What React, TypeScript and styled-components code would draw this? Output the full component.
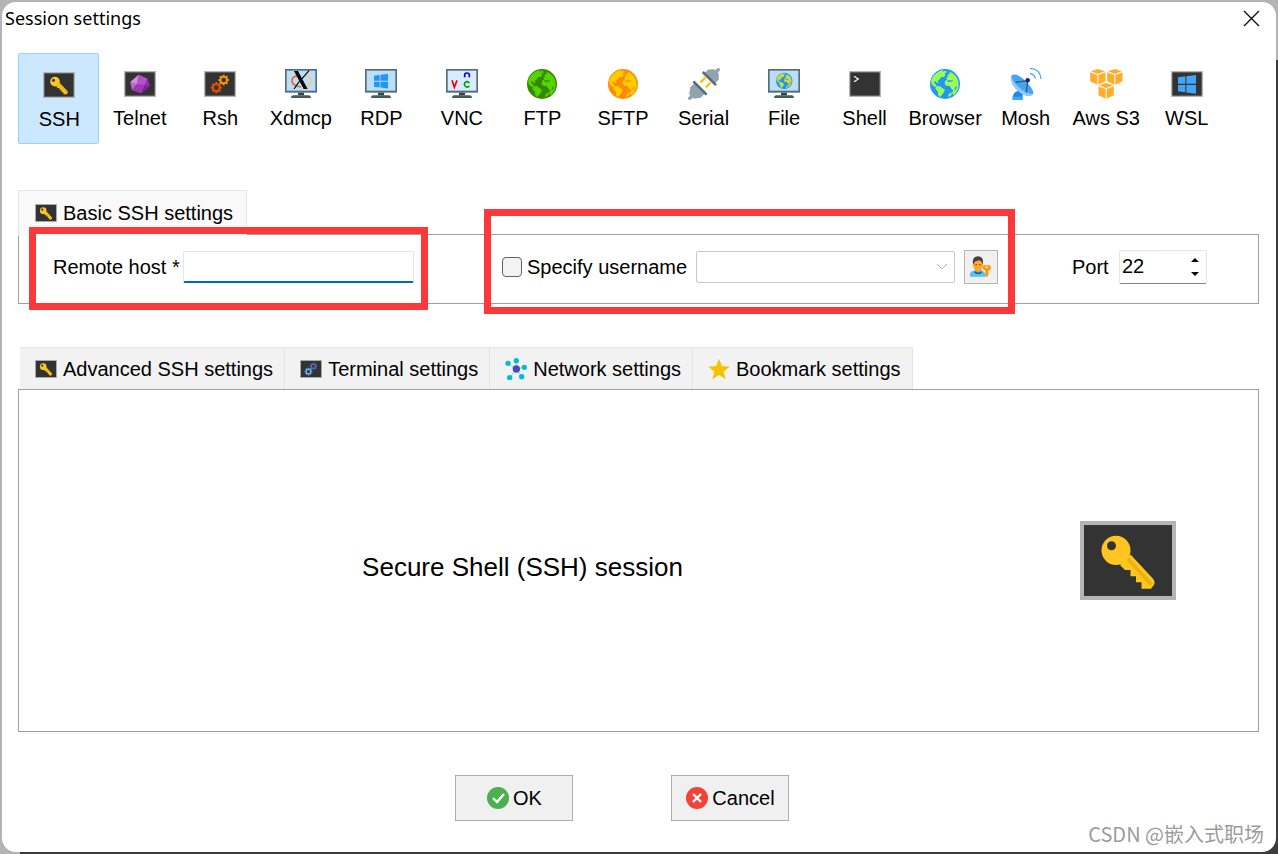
import React, { useState } from "react";
import styled, { createGlobalStyle, css } from "styled-components";

const GlobalStyle = createGlobalStyle`
  * { box-sizing: border-box; }
  body {
    margin: 0;
    font-family: "Liberation Sans", Arial, sans-serif;
    font-size: 20px;
    line-height: 24px;
    color: #000;
    background: #b4b4b4;
  }
  button, input, select { font: inherit; color: inherit; }
`;

/* ---------- window ---------- */

const Desktop = styled.div`
  display: flex;
  min-height: 100vh;
  padding: 2px;
  background:
    linear-gradient(#3c3c3c, #3c3c3c) 20px 100% / 100% 12px no-repeat,
    linear-gradient(transparent 60px, #3c3c3c 60px) 100% 0 / 12px 100% no-repeat,
    #b4b4b4;
`;

const Dialog = styled.main`
  position: relative;
  flex: 1;
  display: flex;
  flex-direction: column;
  min-width: 0;
  background: #fff;
  border-radius: 14px;
`;

const TitleBar = styled.header`
  display: flex;
  align-items: center;
  justify-content: space-between;
  height: 32px;
  padding: 0 14px 0 3px;
`;

const Title = styled.h1`
  margin: 0;
  font: 400 18px/24px "Noto Sans", "Open Sans", sans-serif;
`;

const CloseButton = styled.button`
  display: flex;
  padding: 2px;
  border: 0;
  background: none;
`;

const Content = styled.div`
  flex: 1;
  display: flex;
  flex-direction: column;
  padding: 19px 17px 31px 16px;
`;

/* ---------- session types ---------- */

const SessionTypes = styled.nav`
  display: grid;
  grid-template-columns: repeat(15, 1fr);
  margin-right: 33px;
`;

const SessionType = styled.button<{ $active?: boolean }>`
  display: flex;
  flex-direction: column;
  align-items: center;
  gap: 6px;
  min-width: 0;
  height: 91px;
  padding: 14px 0 0 2px;
  border: 1px solid transparent;
  border-radius: 2px;
  background: none;
  white-space: nowrap;
  ${(p) =>
    p.$active &&
    css`
      padding-top: 15px;
      background: #cce8ff;
      border-color: #99d1ff;
    `}
`;

const IconBox = styled.span`
  display: flex;
  align-items: center;
  justify-content: center;
  height: 32px;
`;

/* ---------- tabs and panels ---------- */

const Section = styled.section<{ $grow?: boolean }>`
  display: flex;
  flex-direction: column;
  flex: ${(p) => (p.$grow ? "1" : "none")};
  margin-top: ${(p) => (p.$grow ? "43px" : "46px")};
`;

const TabList = styled.div<{ $inset?: boolean }>`
  display: flex;
  padding-left: ${(p) => (p.$inset ? "2px" : "0")};
`;

const Tab = styled.button<{ $active?: boolean }>`
  display: flex;
  align-items: center;
  gap: 6px;
  height: 42px;
  padding: 0 11px 0 15px;
  border: solid #e5e5e5;
  border-width: 1px 1px 0 0;
  background: #f2f2f2;
  white-space: nowrap;
  ${(p) =>
    p.$active &&
    css`
      position: relative;
      z-index: 1;
      height: 46px;
      margin-bottom: -2px;
      padding: 0 13px 2px 16px;
      border-left-width: 1px;
      background: #f9f9f9;
    `}
`;

const Panel = styled.div`
  border: 1px solid #a0a0a0;
`;

const BasicForm = styled(Panel)`
  display: grid;
  grid-template-columns: 449fr 570fr 186fr;
  padding: 15px 0 19px 34px;
`;

const SessionPanel = styled(Panel)`
  flex: 1;
  display: grid;
  grid-template-columns: 1007fr 232fr;
  align-items: center;
  justify-items: center;
  min-height: 160px;
  > svg { margin-right: 28px; }
`;

const SessionName = styled.p`
  margin: 0;
  padding-top: 12px;
  font-size: 26px;
  line-height: 32px;
`;

/* ---------- form parts ---------- */

const Field = styled.div`
  position: relative;
  justify-self: start;
  display: flex;
  align-items: center;
  height: 34px;
  white-space: nowrap;
`;

const Label = styled.label<{ $width: number }>`
  width: ${(p) => p.$width}px;
`;

const Highlight = styled.span<{ $inset: string }>`
  position: absolute;
  z-index: 2;
  inset: ${(p) => p.$inset};
  border: 7px solid #fd3838;
  pointer-events: none;
`;

const HostInput = styled.input`
  width: 231px;
  height: 32px;
  padding: 0 4px;
  border: 1px solid #e5e5e5;
  border-bottom: 2px solid #0067c0;
  border-radius: 2px;
  background: #fff;
  outline: 0;
`;

const CheckBox = styled.input`
  appearance: none;
  width: 20px;
  height: 20px;
  margin: 0 5px 0 0;
  border: 1px solid #626262;
  border-radius: 4px;
  background: #f3f3f3;
  &:checked { background: #0067c0; }
`;

const SelectWrap = styled.span`
  display: grid;
  align-items: center;
  > * { grid-area: 1 / 1; }
  > svg { justify-self: end; margin-right: 7px; pointer-events: none; }
`;

const Select = styled.select`
  appearance: none;
  width: 259px;
  height: 32px;
  padding: 0 28px 0 6px;
  border: 1px solid #c8c8c8;
  border-radius: 2px;
  background: #fff;
  &:disabled { opacity: 1; }
`;

const UserButton = styled.button`
  display: flex;
  align-items: center;
  justify-content: center;
  width: 34px;
  height: 34px;
  margin-left: 9px;
  padding: 0;
  border: 1px solid #b4b4b4;
  background: #f0f0f0;
`;

const Spinner = styled.span`
  display: flex;
  width: 88px;
  height: 34px;
  border: 1px solid #e5e5e5;
  border-bottom-color: #868686;
  border-radius: 2px;
`;

const PortInput = styled.input`
  flex: 1;
  min-width: 0;
  padding: 0 0 2px 2px;
  border: 0;
  background: none;
  outline: 0;
  appearance: textfield;
  &::-webkit-inner-spin-button { appearance: none; }
`;

const SpinButtons = styled.span`
  display: flex;
  flex-direction: column;
  justify-content: center;
  gap: 2px;
  width: 22px;
`;

const SpinButton = styled.button`
  display: flex;
  align-items: center;
  justify-content: center;
  height: 12px;
  padding: 0;
  border: 0;
  background: none;
`;

/* ---------- footer ---------- */

const Actions = styled.footer`
  display: flex;
  justify-content: center;
  gap: 98px;
  margin: 43px 34px 0 0;
`;

const ActionButton = styled.button`
  display: flex;
  align-items: center;
  justify-content: center;
  gap: 4px;
  width: 118px;
  height: 46px;
  padding: 0 0 0 2px;
  border: 1px solid #adadad;
  background: #f0f0f0;
`;

const Watermark = styled.span`
  position: absolute;
  right: 12px;
  bottom: 6px;
  font: 400 20px/24px "Noto Sans CJK SC", sans-serif;
  color: #9c9c9c;
`;

/* ---------- icons ---------- */

const TerminalFrame = ({ width = 32, height = 26, children }: { width?: number; height?: number; children: React.ReactNode }) => (
  <svg width={width} height={height} viewBox="0 0 96 78" preserveAspectRatio="none" aria-hidden="true">
    <rect width="96" height="78" fill="#b4b4b4" />
    <rect x="4" y="4" width="88" height="70" fill="#333" />
    {children}
  </svg>
);

const KeyIcon = (p: { width?: number; height?: number }) => (
  <TerminalFrame {...p}>
    <path d="M50.500 33 73 57q2.500 3 1 6l-3 4h-9.500v-6.500H56V54.500h-5.500V48.500H45l-5-5z" fill="#ffc520" />
    <path d="M48 35 73 62l-3 2-25-27z" fill="#eab20c" />
    <circle cx="36" cy="29" r="14.500" fill="#ffc520" />
    <circle cx="31.500" cy="24.500" r="4.500" fill="#333" />
  </TerminalFrame>
);

const gearPath = (cx: number, cy: number, r: number) => {
  const points: string[] = [];
  for (let i = 0; i < 8; i++) {
    const a = (i * Math.PI) / 4;
    [[-0.3, 0.72], [-0.19, 1], [0.19, 1], [0.3, 0.72]].forEach(([d, k]) =>
      points.push(`${(cx + r * k * Math.cos(a + d)).toFixed(2)} ${(cy + r * k * Math.sin(a + d)).toFixed(2)}`)
    );
  }
  const h = r * 0.42;
  return `M${points.join("L")}ZM${cx - h} ${cy}a${h} ${h} 0 1 0 ${2 * h} 0a${h} ${h} 0 1 0 ${-2 * h} 0Z`;
};

const GearsIcon = ({ back, front, ...p }: { back: string; front: string; width?: number; height?: number }) => (
  <TerminalFrame {...p}>
    <path fillRule="evenodd" fill={back} d={gearPath(59, 27, 16)} />
    <path fillRule="evenodd" fill={front} d={gearPath(37, 50, 17)} />
  </TerminalFrame>
);

const GemIcon = () => (
  <TerminalFrame>
    <path d="M44 11 70 23 77 44 52 67 24 57 19 33z" fill="#ab47bc" />
    <path d="M44 11 38 40 19 33z" fill="#ce93d8" />
    <path d="M19 33 38 40 24 57z" fill="#ba68c8" />
    <path d="M44 11 70 23 62 42 38 40z" fill="#b650ca" />
    <path d="M70 23 77 44 62 42z" fill="#9c27b0" />
    <path d="M38 40 62 42 52 67 24 57z" fill="#a236b5" />
    <path d="M62 42 77 44 52 67z" fill="#7b1fa2" />
  </TerminalFrame>
);

const ShellIcon = () => (
  <TerminalFrame>
    <path d="M15 16 28 24 15 32" fill="none" stroke="#fff" strokeWidth="3.500" />
  </TerminalFrame>
);

const windowsPath = "M0 4 22 1V23H0ZM25 0.500 54 -3V23H25ZM0 27H22V49L0 46ZM25 27H54V53L25 49.500Z";

const WslIcon = () => (
  <TerminalFrame>
    <path transform="translate(21 15)" d={windowsPath} fill="#42a5f5" />
  </TerminalFrame>
);

const Monitor = ({ screen = "#bbdefb", children }: { screen?: string; children: React.ReactNode }) => (
  <svg width="32" height="30" viewBox="0 0 96 90" aria-hidden="true">
    <rect width="96" height="71" fill="#546e7a" />
    <rect x="5" y="5" width="86" height="60" fill={screen} />
    <path d="M39 71H57V79H39Z" fill="#37474f" />
    <path d="M24 79H72Q78 80 78 87H18Q18 80 24 79Z" fill="#455a64" />
    {children}
  </svg>
);

const XdmcpIcon = () => (
  <Monitor>
    <path d="M40 19C14 24 12 48 48 54" fill="none" stroke="#f4652a" strokeWidth="5" />
    <path d="M60 18C86 25 84 48 56 54" fill="none" stroke="#ffc46b" strokeWidth="4" />
    <path d="M27 6H39L68 60H56Z" fill="#000" />
    <path d="M72 5 51 29M43 37 27 60" stroke="#000" strokeWidth="3.500" />
  </Monitor>
);

const RdpIcon = () => (
  <Monitor>
    <path transform="translate(27 17) scale(.78)" d={windowsPath} fill="#2196f3" />
  </Monitor>
);

const VncIcon = () => (
  <Monitor screen="#d9ecfb">
    <path d="M18 34 25 55 33 34" fill="none" stroke="#f00000" strokeWidth="5" />
    <path d="M56 25V18Q56 12 63 12T70 18V25" fill="none" stroke="#0000f0" strokeWidth="5" />
    <path d="M70 42Q66 37 61 38 55 40 55 46T61 54Q67 55 70 51" fill="none" stroke="#009a00" strokeWidth="5" />
  </Monitor>
);

const GlobeShape = ({ sea, land }: { sea: string; land: string }) => (
  <>
    <circle cx="44" cy="44" r="44" fill={sea} />
    <path
      fill={land}
      d="M14 16Q25 5 39 2L36 8 45 5 50 9 43 13 45 19 38 24 33 23 28 31 22 35 26 42 20 40 15 35 11 39 20 49 14 53 5 45 3 34Q6 24 14 16Z
         M17 51 28 50 38 57 44 61 39 71 33 78 29 83 24 76 23 66 16 59Z
         M58 8Q79 18 83 36L84 49Q82 66 69 77L65 71 68 62 61 56 57 49 49 50 43 44 44 35 51 30 47 26 54 23 50 18 57 15Z
         M55 73 65 68 62 78 53 83Z"
    />
    <path fill={sea} d="M52 32 59 34 67 32 66 36 57 38 50 36ZM73 54 79 49 77 59 72 64Z" />
  </>
);

const GlobeIcon = (p: { sea: string; land: string }) => (
  <svg width="30" height="30" viewBox="0 0 88 88" aria-hidden="true">
    <GlobeShape {...p} />
  </svg>
);

const FileIcon = () => (
  <Monitor>
    <g transform="translate(24 11) scale(.56)">
      <GlobeShape sea="#2196f3" land="#cddc39" />
    </g>
  </Monitor>
);

const SerialIcon = () => (
  <svg width="32" height="32" viewBox="0 0 96 96" aria-hidden="true">
    <g transform="rotate(45 48 48)">
      <path d="M37 31V52M59 31V52" stroke="#ffc107" strokeWidth="7" />
      <path d="M43-17H53V-2H43Z" fill="#90a4ae" />
      <path d="M38-5H58L70 8V23H26V8Z" fill="#90a4ae" />
      <rect x="20" y="21" width="56" height="8" fill="#546e7a" />
      <path d="M43 98H53V113H43Z" fill="#90a4ae" />
      <path d="M26 66H70V84L58 101H38L26 84Z" fill="#90a4ae" />
      <rect x="20" y="61" width="56" height="8" fill="#546e7a" />
    </g>
  </svg>
);

const DishIcon = () => (
  <svg width="32" height="34" viewBox="0 0 96 100" aria-hidden="true">
    <path d="M12 78 23 70 38 80V98H8V88Z" fill="#1e88e5" />
    <path d="M8 88H35V98H8Z" fill="#42a5f5" />
    <path d="M4 25Q18 14 43 38 75 68 69 80 58 94 27 73 0 52 4 25Z" fill="#42a5f5" />
    <path d="M4 25Q7 42 30 63 53 82 69 80 57 94 28 74 0 52 4 25Z" fill="#90caf9" />
    <path d="M17 45 53 40 49 76" fill="none" stroke="#455a64" strokeWidth="4" />
    <circle cx="53" cy="39" r="7" fill="#0d2f85" />
    <path d="M60 19Q74 21 76 34M60 3Q91 5 93 35" fill="none" stroke="#42a5f5" strokeWidth="3.500" />
  </svg>
);

const Cube = ({ x, y }: { x: number; y: number }) => (
  <g transform={`translate(${x} ${y})`} fill="#ffad2b">
    <path d="M23 0 44 7 23 15 2 7Z" />
    <path d="M0 10 21.500 18V47L0 37Z" />
    <path d="M46 10 24.500 18V47L46 37Z" />
  </g>
);

const AwsIcon = () => (
  <svg width="33" height="30" viewBox="0 0 98 90" aria-hidden="true">
    <Cube x={0} y={0} />
    <Cube x={51} y={0} />
    <Cube x={25} y={42} />
  </svg>
);

const NetworkIcon = () => (
  <svg width="22" height="22" viewBox="0 0 66 66" aria-hidden="true">
    <path d="M34 33 9 16M34 33V8M34 33 57 28M34 33 50 56M34 33 15 59" stroke="#b0bec5" strokeWidth="3" />
    <circle cx="34" cy="33" r="11" fill="#3f51b5" />
    {[[9, 16], [34, 8], [58, 28], [50, 56], [14, 59]].map(([x, y]) => (
      <circle key={x} cx={x} cy={y} r="8" fill="#00bcd4" />
    ))}
  </svg>
);

const StarIcon = () => (
  <svg width="22" height="22" viewBox="0 0 66 66" aria-hidden="true">
    <path d="M33 2 42 24 65 26 47 41 53 64 33 51 13 64 19 41 1 26 24 24Z" fill="#f5c400" />
  </svg>
);

const UserKeyIcon = () => (
  <svg width="22" height="22" viewBox="0 0 66 66" aria-hidden="true">
    <path d="M0 62V54Q1 45 17 42H31Q46 45 48 62Z" fill="#4fc3f7" />
    <path d="M15 42 24 52 33 42V36H15Z" fill="#ff9800" />
    <path d="M14 47Q24 57 35 47" fill="none" stroke="#01579b" strokeWidth="4" />
    <ellipse cx="24" cy="27" rx="15" ry="18" fill="#ffa726" />
    <path d="M9 26Q5 2 23 1 42 1 39 26L35 17 29 13 16 16Z" fill="#424242" />
    <path d="M16 26H21M27 26H32" stroke="#784719" strokeWidth="3" />
    <path d="M40 28H60L63 33 60 43H55V58L50 63 46 58V43H41L38 34Z" fill="#ff9800" />
    <rect x="46" y="32" width="8" height="4" fill="#fff3e0" />
  </svg>
);

const StatusIcon = ({ color, mark }: { color: string; mark: string }) => (
  <svg width="22" height="22" viewBox="0 0 22 22" aria-hidden="true">
    <circle cx="11" cy="11" r="11" fill={color} />
    <path d={mark} fill="none" stroke="#fff" strokeWidth="2.400" />
  </svg>
);

/* ---------- data ---------- */

const sessionTypes: { name: string; icon: React.ReactNode }[] = [
  { name: "SSH", icon: <KeyIcon /> },
  { name: "Telnet", icon: <GemIcon /> },
  { name: "Rsh", icon: <GearsIcon back="#ff9800" front="#e65100" /> },
  { name: "Xdmcp", icon: <XdmcpIcon /> },
  { name: "RDP", icon: <RdpIcon /> },
  { name: "VNC", icon: <VncIcon /> },
  { name: "FTP", icon: <GlobeIcon sea="#388700" land="#55d500" /> },
  { name: "SFTP", icon: <GlobeIcon sea="#ff8c00" land="#ffcc00" /> },
  { name: "Serial", icon: <SerialIcon /> },
  { name: "File", icon: <FileIcon /> },
  { name: "Shell", icon: <ShellIcon /> },
  { name: "Browser", icon: <GlobeIcon sea="#2196f3" land="#99ff55" /> },
  { name: "Mosh", icon: <DishIcon /> },
  { name: "Aws S3", icon: <AwsIcon /> },
  { name: "WSL", icon: <WslIcon /> },
];

const settingTabs = [
  { name: "Advanced SSH settings", icon: <KeyIcon width={22} height={18} /> },
  { name: "Terminal settings", icon: <GearsIcon width={22} height={18} back="#5c6bc0" front="#64b5f6" /> },
  { name: "Network settings", icon: <NetworkIcon /> },
  { name: "Bookmark settings", icon: <StarIcon /> },
];

export default function App() {
  const [active, setActive] = useState("SSH");
  const [port, setPort] = useState(22);

  return (
    <>
      <GlobalStyle />
      <Desktop>
        <Dialog>
          <TitleBar>
            <Title>Session settings</Title>
            <CloseButton aria-label="Close">
              <svg width="17" height="17" viewBox="0 0 17 17" aria-hidden="true">
                <path d="M1 1 16 16M16 1 1 16" stroke="#111" strokeWidth="1.400" />
              </svg>
            </CloseButton>
          </TitleBar>
          <Content>
            <SessionTypes aria-label="Session type">
              {sessionTypes.map(({ name, icon }) => (
                <SessionType key={name} $active={name === active} onClick={() => setActive(name)}>
                  <IconBox>{icon}</IconBox>
                  {name}
                </SessionType>
              ))}
            </SessionTypes>

            <Section>
              <TabList role="tablist">
                <Tab $active role="tab" aria-selected="true">
                  <KeyIcon width={22} height={18} />
                  Basic SSH settings
                </Tab>
              </TabList>
              <BasicForm>
                <Field>
                  <Label $width={130} htmlFor="host">Remote host *</Label>
                  <HostInput id="host" type="text" />
                  <Highlight $inset="-23px -14px -26px -24px" />
                </Field>
                <Field>
                  <CheckBox id="specify" type="checkbox" />
                  <Label $width={169} htmlFor="specify">Specify username</Label>
                  <SelectWrap>
                    <Select aria-label="Username" disabled>
                      <option></option>
                    </Select>
                    <svg width="12" height="8" viewBox="0 0 12 8" aria-hidden="true">
                      <path d="M1 1 6 6 11 1" fill="none" stroke="#b4b4b4" />
                    </svg>
                  </SelectWrap>
                  <UserButton aria-label="Manage credentials">
                    <UserKeyIcon />
                  </UserButton>
                  <Highlight $inset="-41px -17px -30px -18px" />
                </Field>
                <Field>
                  <Label $width={47} htmlFor="port">Port</Label>
                  <Spinner>
                    <PortInput id="port" type="number" value={port} onChange={(e) => setPort(Number(e.target.value))} />
                    <SpinButtons>
                      <SpinButton aria-label="Increase port" onClick={() => setPort(port + 1)}>
                        <svg width="8" height="4" viewBox="0 0 8 4"><path d="M0 4 4 0 8 4Z" /></svg>
                      </SpinButton>
                      <SpinButton aria-label="Decrease port" onClick={() => setPort(port - 1)}>
                        <svg width="8" height="4" viewBox="0 0 8 4"><path d="M0 0 4 4 8 0Z" /></svg>
                      </SpinButton>
                    </SpinButtons>
                  </Spinner>
                </Field>
              </BasicForm>
            </Section>

            <Section $grow>
              <TabList $inset role="tablist">
                {settingTabs.map(({ name, icon }) => (
                  <Tab key={name} role="tab" aria-selected="false">
                    {icon}
                    {name}
                  </Tab>
                ))}
              </TabList>
              <SessionPanel>
                <SessionName>Secure Shell (SSH) session</SessionName>
                <KeyIcon width={96} height={79} />
              </SessionPanel>
            </Section>

            <Actions>
              <ActionButton>
                <StatusIcon color="#4caf50" mark="M6 11 10 15 17 7" />
                OK
              </ActionButton>
              <ActionButton>
                <StatusIcon color="#f44336" mark="M7 7 15 15M15 7 7 15" />
                Cancel
              </ActionButton>
            </Actions>
          </Content>
          <Watermark>CSDN @嵌入式职场</Watermark>
        </Dialog>
      </Desktop>
    </>
  );
}
